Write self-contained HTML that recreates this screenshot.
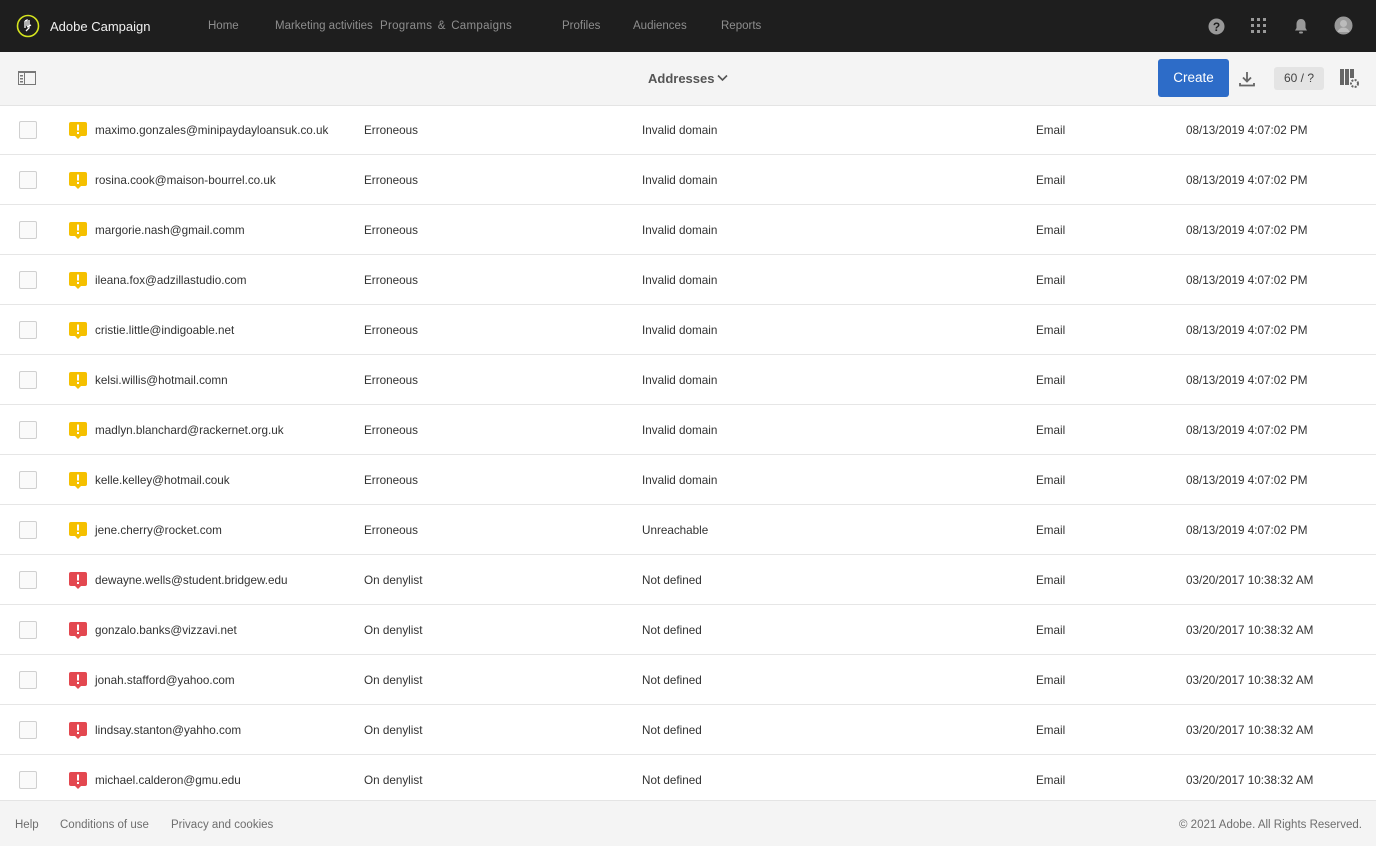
<!DOCTYPE html>
<html><head><meta charset="utf-8"><style>
*{box-sizing:border-box;margin:0;padding:0}
body{width:1376px;height:846px;overflow:hidden;background:#fff;font-family:"Liberation Sans",sans-serif;color:#323232;position:relative}
.top{position:absolute;left:0;top:0;width:1376px;height:52px;background:#1e1e1e}
.top .t{position:absolute;top:20px;font-size:11.5px;color:#8e8e8e}
.bar{position:absolute;left:0;top:52px;width:1376px;height:54px;background:#f4f4f4;border-bottom:1px solid #e4e4e4}
.row{position:absolute;left:0;width:1376px;height:50px;border-bottom:1px solid #e6e6e6;font-size:11.7px}
.row span{position:absolute;top:19px}
.cb{position:absolute;left:19px;top:16px;width:18px;height:18px;border:1px solid #d0d0d0;background:#fafafa;border-radius:2px}
.ic{position:absolute;left:69px;top:17px}
.foot{position:absolute;left:0;top:800px;width:1376px;height:46px;background:#f4f4f4;border-top:1px solid #e4e4e4;font-size:11.5px;color:#6e6e6e}
.foot span{position:absolute;top:18px}
</style></head><body>
<div class="top">
<svg style="position:absolute;left:16px;top:14px" width="24" height="24" viewBox="0 0 24 24"><circle cx="12" cy="12" r="10.5" fill="none" stroke="#d6e51e" stroke-width="1.6"/><path d="M9 7v7M9 7l2-1v6M13 6v8l-3 3M11 13l4-2" fill="none" stroke="#fff" stroke-width="1.3"/></svg>
<span class="t" style="left:50px;color:#f0f0f0;font-size:13px;top:19px">Adobe Campaign</span>
<span class="t" style="left:208px">Home</span>
<span class="t" style="left:275px">Marketing activities</span>
<span class="t" style="left:380px;letter-spacing:0.3px;word-spacing:2px">Programs &amp; Campaigns</span>
<span class="t" style="left:562px">Profiles</span>
<span class="t" style="left:633px">Audiences</span>
<span class="t" style="left:721px">Reports</span>
<svg style="position:absolute;left:1208px;top:18px" width="17" height="17"><circle cx="8.5" cy="8.5" r="8" fill="#999"/><text x="8.5" y="13" font-size="12" font-weight="bold" text-anchor="middle" fill="#1e1e1e" font-family="Liberation Sans">?</text></svg>
<svg style="position:absolute;left:1251px;top:18px" width="16" height="16" fill="#999"><rect x="0" y="0" width="3" height="3"/><rect x="6" y="0" width="3" height="3"/><rect x="12" y="0" width="3" height="3"/><rect x="0" y="6" width="3" height="3"/><rect x="6" y="6" width="3" height="3"/><rect x="12" y="6" width="3" height="3"/><rect x="0" y="12" width="3" height="3"/><rect x="6" y="12" width="3" height="3"/><rect x="12" y="12" width="3" height="3"/></svg>
<svg style="position:absolute;left:1293px;top:18px" width="16" height="17" fill="#999"><path d="M8 1c-3 0-4.5 2.5-4.5 5v4L2 12.5h12L12.5 10V6C12.5 3.5 11 1 8 1z"/><rect x="6" y="13.5" width="4" height="2" rx="1"/></svg>
<svg style="position:absolute;left:1334px;top:16px" width="19" height="19"><circle cx="9.5" cy="9.5" r="9" fill="#999"/><circle cx="9.5" cy="7.5" r="3.5" fill="#bbb"/><path d="M3.5 16c1-3 3.5-4.5 6-4.5s5 1.5 6 4.5" fill="#bbb"/></svg>
</div>
<div class="bar">
<svg style="position:absolute;left:18px;top:19px" width="19" height="15"><rect x="0.5" y="0.5" width="17" height="13" fill="none" stroke="#777"/><rect x="0" y="0" width="18" height="2" fill="#777"/><rect x="2" y="4" width="3" height="1.5" fill="#777"/><rect x="2" y="7" width="3" height="1.5" fill="#777"/><rect x="2" y="10" width="3" height="1.5" fill="#777"/><rect x="6" y="2" width="1" height="12" fill="#777"/></svg>
<span style="position:absolute;left:648px;top:19px;font-size:13px;color:#555;font-weight:bold">Addresses</span>
<svg style="position:absolute;left:717px;top:22px" width="11" height="8"><path d="M1 1.5l4.5 4.5 4.5-4.5" fill="none" stroke="#555" stroke-width="1.6"/></svg>
<div style="position:absolute;left:1158px;top:7px;width:71px;height:38px;background:#2d6cc8;border-radius:3px;color:#fff;font-size:13.5px;text-align:center;line-height:38px">Create</div>
<svg style="position:absolute;left:1239px;top:19px" width="16" height="16" fill="none" stroke="#666" stroke-width="1.8"><path d="M8 1v9M4 6.5l4 4 4-4M1 12v2.5h14V12"/></svg>
<div style="position:absolute;left:1274px;top:15px;width:50px;height:23px;background:#e4e4e4;border-radius:3px;font-size:12px;text-align:center;line-height:23px;color:#444">60 / ?</div>
<svg style="position:absolute;left:1340px;top:17px" width="20" height="20" fill="#666"><rect x="0" y="0" width="4" height="16"/><rect x="5" y="0" width="4" height="16"/><rect x="10" y="0" width="4" height="9"/><circle cx="14.5" cy="14.5" r="3.5" fill="none" stroke="#666" stroke-width="2" stroke-dasharray="2 1.3"/></svg>
</div>
<div id="rows"></div>
<div class="foot"><span style="left:15px">Help</span><span style="left:60px">Conditions of use</span><span style="left:171px">Privacy and cookies</span><span style="left:1179px">© 2021 Adobe. All Rights Reserved.</span></div>
<script>
var d=[["maximo.gonzales@minipaydayloansuk.co.uk",0,"Invalid domain"],["rosina.cook@maison-bourrel.co.uk",0,"Invalid domain"],["margorie.nash@gmail.comm",0,"Invalid domain"],["ileana.fox@adzillastudio.com",0,"Invalid domain"],["cristie.little@indigoable.net",0,"Invalid domain"],["kelsi.willis@hotmail.comn",0,"Invalid domain"],["madlyn.blanchard@rackernet.org.uk",0,"Invalid domain"],["kelle.kelley@hotmail.couk",0,"Invalid domain"],["jene.cherry@rocket.com",0,"Unreachable"],["dewayne.wells@student.bridgew.edu",1,"Not defined"],["gonzalo.banks@vizzavi.net",1,"Not defined"],["jonah.stafford@yahoo.com",1,"Not defined"],["lindsay.stanton@yahho.com",1,"Not defined"],["michael.calderon@gmu.edu",1,"Not defined"]];
var h="";d.forEach(function(r,i){var c=r[1]?"#e34850":"#f5c000";h+='<div class="row" style="top:'+(105+i*50)+'px"><div class="cb"></div><svg class="ic" width="18" height="17"><rect x="0" y="0" width="18" height="14" rx="2" fill="'+c+'"/><path d="M6 14l3 3 3-3z" fill="'+c+'"/><rect x="8" y="2.5" width="2" height="6" fill="#fff"/><rect x="8" y="10" width="2" height="2" fill="#fff"/></svg><span style="left:95px">'+r[0]+'</span><span style="left:364px">'+(r[1]?"On denylist":"Erroneous")+'</span><span style="left:642px">'+r[2]+'</span><span style="left:1036px">Email</span><span style="left:1186px">'+(r[1]?"03/20/2017 10:38:32 AM":"08/13/2019 4:07:02 PM")+'</span></div>'});
document.getElementById("rows").innerHTML=h;
</script>
</body></html>
